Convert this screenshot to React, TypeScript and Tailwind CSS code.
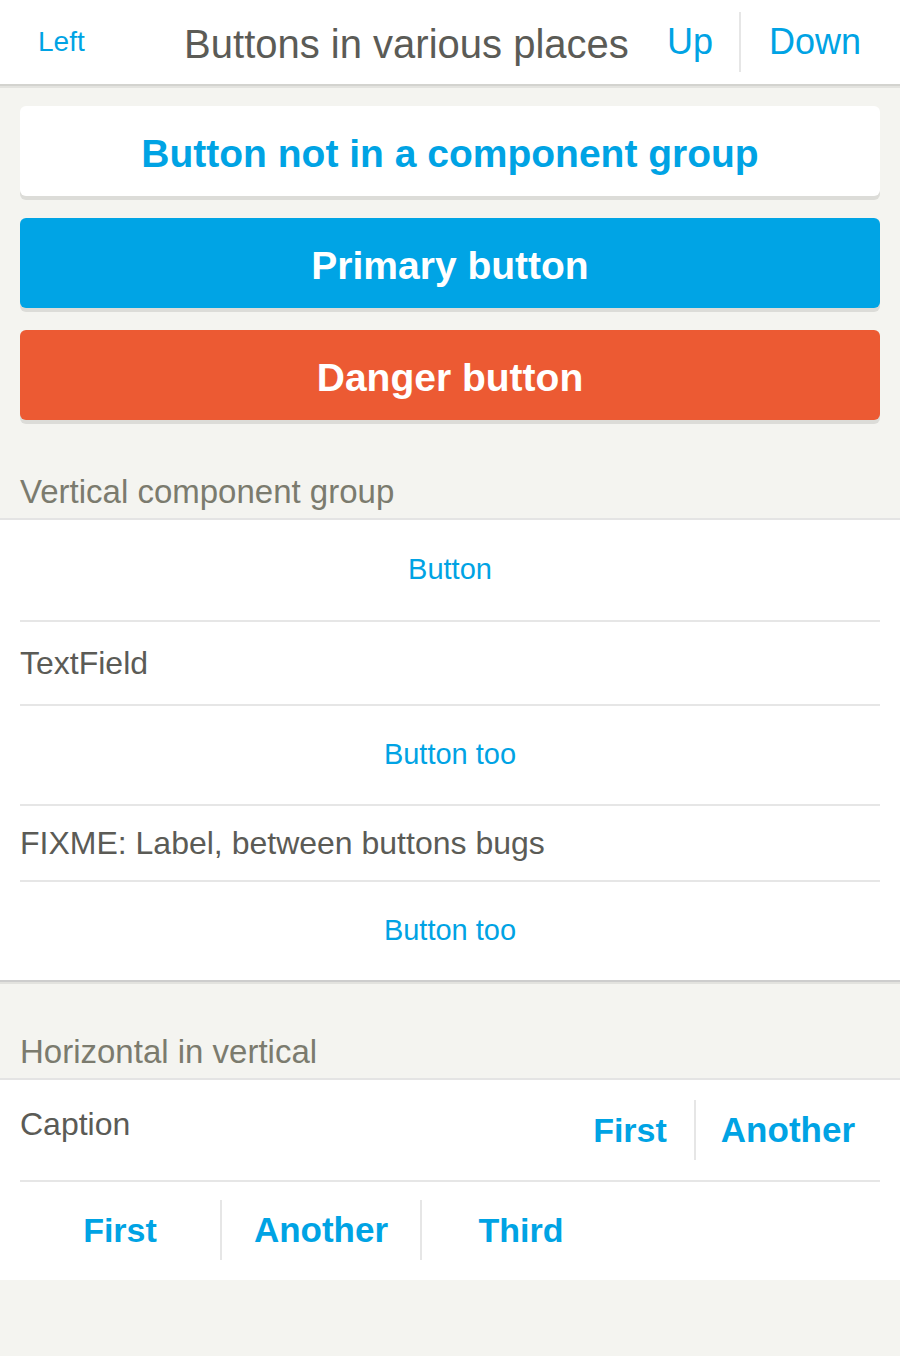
export default function App() {
  const font = { fontFamily: '"Liberation Sans", Arial, sans-serif' };

  return (
    <div className="min-h-screen bg-[#f4f4f0]" style={font}>
      {/* Header */}
      <header className="flex h-[84px] items-center bg-white border-b-2 border-[#d3d3cf] shadow-[0_2px_0_#e3e3df] box-content">
        <div className="w-[172px] shrink-0 pl-[38px] text-[28px] text-[#00a3e4]">Left</div>
        <div className="flex-1 pt-[3px] text-center text-[40px] text-[#5b5b56]">Buttons in various places</div>
        <div className="flex items-center">
          <div className="px-[26px] text-[36px] text-[#00a3e4]">Up</div>
          <div className="h-[60px] w-[2px] bg-[#e6e6e6]" />
          <div className="pl-[28px] pr-[39px] text-[36px] text-[#00a3e4]">Down</div>
        </div>
      </header>

      {/* Standalone buttons */}
      <div className="flex flex-col gap-[22px] px-5 pt-5">
        <button className="h-[90px] rounded-[6px] bg-white pt-[6px] text-[39px] font-bold text-[#00a3e4] shadow-[0_4px_0_#dcdcd8]">
          Button not in a component group
        </button>
        <button className="h-[90px] rounded-[6px] bg-[#00a4e5] pt-[6px] text-[39px] font-bold text-white shadow-[0_4px_0_#dcdcd8]">
          Primary button
        </button>
        <button className="h-[90px] rounded-[6px] bg-[#ec5a33] pt-[6px] text-[39px] font-bold text-white shadow-[0_4px_0_#dcdcd8]">
          Danger button
        </button>
      </div>

      {/* Vertical group */}
      <div className="px-5 pt-[54px] pb-2 text-[33px] leading-[36px] text-[#7b7b6e]">Vertical component group</div>
      <section className="bg-white border-t-2 border-[#e4e4e4] border-b-2 border-b-[#cdcdcd] shadow-[0_2px_0_#e2e2de]">
        <div className="flex h-[100px] items-center justify-center text-[29px] text-[#00a3e4]">Button</div>
        <div className="mx-5 h-[2px] bg-[#e6e6e6]" />
        <div className="flex h-[82px] items-center px-5 text-[32px] text-[#5b5b56]">TextField</div>
        <div className="mx-5 h-[2px] bg-[#e6e6e6]" />
        <div className="flex h-[98px] items-center justify-center text-[29px] text-[#00a3e4]">Button too</div>
        <div className="mx-5 h-[2px] bg-[#e6e6e6]" />
        <div className="flex h-[74px] items-center px-5 text-[32px] text-[#5b5b56]">FIXME: Label, between buttons bugs</div>
        <div className="mx-5 h-[2px] bg-[#e6e6e6]" />
        <div className="flex h-[98px] items-center justify-center text-[29px] text-[#00a3e4]">Button too</div>
      </section>

      {/* Horizontal in vertical */}
      <div className="px-5 pt-[52px] pb-2 text-[33px] leading-[36px] text-[#7b7b6e]">Horizontal in vertical</div>
      <section className="bg-white border-t-2 border-[#e4e4e4]">
        <div className="flex h-[100px] items-start justify-between px-5">
          <div className="pt-[25px] text-[32px] leading-[38px] text-[#5b5b56]">Caption</div>
          <div className="mt-5 flex h-[60px] items-center">
            <div className="px-[27px] text-[34px] font-bold text-[#00a3e4]">First</div>
            <div className="h-[60px] w-[2px] bg-[#e6e6e6]" />
            <div className="px-[25px] text-[35px] font-bold text-[#00a3e4]">Another</div>
          </div>
        </div>
        <div className="mx-5 h-[2px] bg-[#e6e6e6]" />
        <div className="flex h-[98px] items-start px-5 pt-[18px]">
          <div className="flex h-[60px] w-[200px] items-center justify-center text-[34px] font-bold text-[#00a3e4]">First</div>
          <div className="h-[60px] w-[2px] bg-[#e6e6e6]" />
          <div className="flex h-[60px] w-[198px] items-center justify-center text-[35px] font-bold text-[#00a3e4]">Another</div>
          <div className="h-[60px] w-[2px] bg-[#e6e6e6]" />
          <div className="flex h-[60px] w-[198px] items-center justify-center text-[34px] font-bold text-[#00a3e4]">Third</div>
        </div>
      </section>
    </div>
  );
}
